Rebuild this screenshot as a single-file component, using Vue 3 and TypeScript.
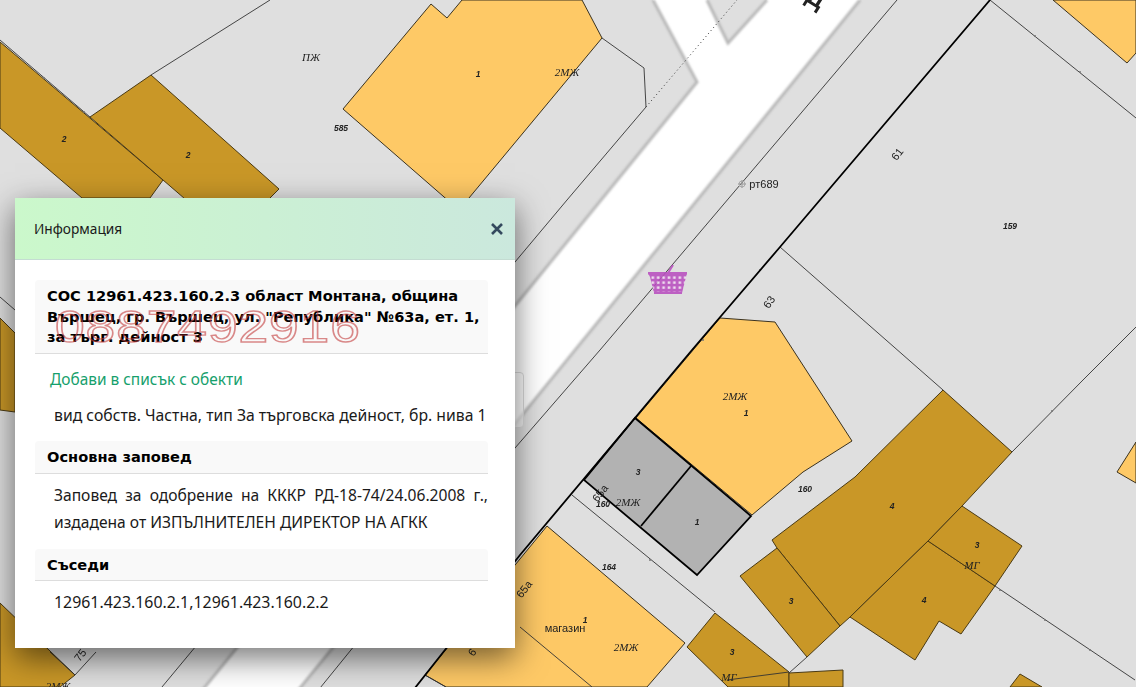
<script setup lang="ts">
import { ref } from 'vue'

interface MapLabel {
  text: string
  x: number
  y: number
  kind: string
  rotate?: number
}

const brown: string[] = [
  '0,42 6,47 163,180 150,198 82,198 0,128',
  '90,117 151,75 279,189 263,205 192,205',
  '0,318 15,333 15,412 0,410',
  '0,603 75,675 60,687 0,687',
  '943,390 1012,452 962,506 928,541 850,617 840,626 777,548 772,540 855,477',
  '777,548 740,576 807,657 840,626',
  '928,541 995,586 961,634 939,621 915,660 850,617',
  '962,506 1022,546 995,586 928,541',
  '715,613 687,647 728,687 789,687 789,672',
  '789,673 843,670 843,687 789,687',
  '1020,674 1010,687 1042,687'
]

const orange: string[] = [
  '431,4 447,18 462,0 582,0 602,38 459,210 343,109',
  '720,318 775,322 852,441 803,472 752,515 636,418',
  '547,526 685,643 647,687 446,687 425,675',
  '1053,0 1127,63 1136,53 1136,0',
  '1136,442 1117,472 1136,483'
]

const thinLines: string[] = [
  '897,0 600,350 515,448 316,693',
  '602,38 644,68 646,107 567,200 515,262 157,693',
  '780,247 943,390',
  '990,0 1136,118',
  '1012,452 1083,380 1136,327',
  '995,586 1135,680',
  '807,657 789,673',
  '789,672 727,680',
  '520,627 592,687',
  '572,495 715,612',
  '270,0 151,75',
  '0,40 90,117',
  '0,297 15,310',
  '50,652 75,675 96,652',
  '446,687 425,675'
]

const labels: MapLabel[] = [
  { text: 'ПЖ', x: 311, y: 61, kind: 'serif' },
  { text: '585', x: 341, y: 131, kind: 'num' },
  { text: '1', x: 478, y: 77, kind: 'num' },
  { text: '2МЖ', x: 567, y: 76, kind: 'serif' },
  { text: '2', x: 64, y: 142, kind: 'num' },
  { text: '2', x: 188, y: 158, kind: 'num' },
  { text: 'рт689', x: 764, y: 188, kind: 'plain' },
  { text: '61', x: 897, y: 158, kind: 'plain', rotate: -52 },
  { text: '159', x: 1010, y: 229, kind: 'num' },
  { text: '63', x: 769, y: 306, kind: 'plain', rotate: -55 },
  { text: '2МЖ', x: 735, y: 400, kind: 'serif' },
  { text: '1', x: 746, y: 416, kind: 'num' },
  { text: '3', x: 638, y: 475, kind: 'num' },
  { text: '1', x: 697, y: 525, kind: 'num' },
  { text: '2МЖ', x: 628, y: 506, kind: 'serif' },
  { text: '160', x: 603, y: 507, kind: 'num' },
  { text: '65а', x: 600, y: 497, kind: 'plain', rotate: -52 },
  { text: '160', x: 805, y: 492, kind: 'num' },
  { text: '164', x: 609, y: 570, kind: 'num' },
  { text: '65а', x: 524, y: 593, kind: 'plain', rotate: -52 },
  { text: '1', x: 585, y: 623, kind: 'num' },
  { text: 'магазин', x: 565, y: 632, kind: 'plain' },
  { text: '2МЖ', x: 626, y: 651, kind: 'serif' },
  { text: '3', x: 732, y: 655, kind: 'num' },
  { text: 'МГ', x: 729, y: 681, kind: 'serif' },
  { text: '4', x: 892, y: 509, kind: 'num' },
  { text: '3', x: 791, y: 604, kind: 'num' },
  { text: '4', x: 924, y: 603, kind: 'num' },
  { text: '3', x: 977, y: 548, kind: 'num' },
  { text: 'МГ', x: 972, y: 569, kind: 'serif' },
  { text: '75', x: 80, y: 659, kind: 'plain', rotate: -52 },
  { text: '6', x: 472, y: 656, kind: 'plain', rotate: -52 },
  { text: '2МЖ', x: 58, y: 690, kind: 'serif' }
]

const ticks: number[][] = [
  [44, 78], [84, 112], [1035, 36], [1080, 72], [760, 270], [703, 340], [608, 506], [650, 560],
  [1052, 411], [1000, 590], [1045, 620], [1090, 650]
]

const open = ref(true)
</script>

<template>
  <div class="page">
    <svg class="map" viewBox="0 0 1136 687" width="1136" height="687">
      <defs>
        <pattern id="basket-grid" width="5.4" height="5" patternUnits="userSpaceOnUse" x="650" y="275">
          <rect width="5.4" height="5" fill="#b94fc0" />
          <rect x="1.5" y="1.4" width="2.6" height="2.4" fill="#f0dcf0" />
        </pattern>
      </defs>
      <rect width="1136" height="687" fill="#dfdfdf" />
      <polygon points="653,0 697,82 200,693 296,693 860,0" fill="#fff" />
      <polygon points="707,0 728,43 767,0" fill="#dfdfdf" />
      <g class="road-edge">
        <polyline points="653,0 697,82 200,693" />
        <polyline points="860,0 296,693" />
        <polyline points="707,0 728,43 767,0" />
      </g>
      <polyline class="dots" points="646,107 737,0" />
      <polygon v-for="p in brown" :key="p" :points="p" class="brown" />
      <polygon v-for="p in orange" :key="p" :points="p" class="orange" />
      <polyline v-for="l in thinLines" :key="l" :points="l" class="thin" />
      <g class="tick">
        <circle v-for="t in ticks" :key="t.join()" :cx="t[0]" :cy="t[1]" r="1" />
      </g>
      <polygon class="selected" points="635,418 751,516 697,575 584,480" />
      <polyline class="heavy" points="691,466 641,526" />
      <polyline class="heavy" points="990,0 780,247 692,350 520,555 411,693" />
      <text
        v-for="l in labels"
        :key="l.text + l.x"
        :x="l.x"
        :y="l.y"
        :class="l.kind"
        :transform="l.rotate ? `rotate(${l.rotate} ${l.x} ${l.y - 4})` : undefined"
      >{{ l.text }}</text>
      <text class="street" x="812" y="5" transform="rotate(32 812 5)">Д</text>
      <g class="marker">
        <circle cx="742" cy="184" r="3" />
        <path d="M742 180 V188 M738 184 H746" />
      </g>
      <g class="basket">
        <line x1="668" y1="273" x2="673" y2="265" />
        <polygon points="648,273 687,273 686,277 682,293 654,293 650,277" fill="url(#basket-grid)" />
        <rect x="648" y="272" width="39" height="2.5" />
        <rect x="654" y="291.5" width="28" height="2.5" />
      </g>
    </svg>

    <div class="map-button"></div>

    <section v-if="open" class="panel">
      <header class="panel-head">
        <span>Информация</span>
        <button class="close" type="button" aria-label="Затвори" @click="open = false">
          <svg viewBox="0 0 12 12" width="12" height="12">
            <path d="M1 1 L11 11 M11 1 L1 11" />
          </svg>
        </button>
      </header>
      <div class="panel-body">
        <h3 class="title">СОС 12961.423.160.2.3 област Монтана, община Вършец, гр. Вършец, ул. "Република" №63а, ет. 1, за търг. дейност 3</h3>
        <a class="add-link" href="#" @click.prevent>Добави в списък с обекти</a>
        <p class="line-kind">вид собств. Частна, тип За търговска дейност, бр. нива 1</p>
        <h3 class="sub">Основна заповед</h3>
        <p class="text">Заповед за одобрение на КККР РД-18-74/24.06.2008 г., издадена от ИЗПЪЛНИТЕЛЕН ДИРЕКТОР НА АГКК</p>
        <h3 class="sub">Съседи</h3>
        <p class="text neighbours">12961.423.160.2.1,12961.423.160.2.2</p>
      </div>
      <div class="watermark">0887492916</div>
    </section>
  </div>
</template>

<style>
html,
body {
  margin: 0;
  overflow: hidden;
}
</style>

<style scoped>
.page {
  position: relative;
  width: 1136px;
  height: 687px;
  overflow: hidden;
  font-family: "Noto Sans", "DejaVu Sans", sans-serif;
  color: #1a1a1a;
}

.map {
  position: absolute;
  left: 0;
  top: 0;
  display: block;
  filter: blur(0.35px);
}

.road-edge polyline {
  fill: none;
  stroke: #b9b9b9;
  stroke-width: 3;
  filter: blur(0.8px);
}

.dots {
  fill: none;
  stroke: #333;
  stroke-width: 1;
  stroke-dasharray: 1 3;
}

.brown {
  fill: #c99727;
  stroke: #4a3a14;
  stroke-width: 1;
}

.orange {
  fill: #fec966;
  stroke: #3a3220;
  stroke-width: 1;
}

.thin {
  fill: none;
  stroke: #333;
  stroke-width: 0.9;
}

.tick {
  fill: #777;
}

.selected {
  fill: #b2b2b2;
  stroke: #000;
  stroke-width: 1.8;
}

.heavy {
  fill: none;
  stroke: #000;
  stroke-width: 1.8;
}

.serif,
.num,
.plain,
.street {
  text-anchor: middle;
  fill: #222;
}

.serif {
  font-family: "Liberation Serif", serif;
  font-style: italic;
  font-size: 11px;
}

.num {
  font-family: "Liberation Sans", sans-serif;
  font-style: italic;
  font-weight: 700;
  font-size: 8.5px;
}

.plain {
  font-family: "Liberation Sans", sans-serif;
  font-size: 11px;
}

.street {
  font-family: "Liberation Sans", sans-serif;
  font-weight: 700;
  font-size: 24px;
}

.marker circle {
  fill: none;
  stroke: #aaa;
}

.marker path {
  fill: none;
  stroke: #999;
}

.basket {
  opacity: 0.88;
}

.basket line {
  stroke: #b94fc0;
  stroke-width: 2;
}

.basket rect {
  fill: #b94fc0;
}

.map-button {
  position: absolute;
  left: 480px;
  top: 372px;
  width: 44px;
  height: 56px;
  box-sizing: border-box;
  border: 1px solid #ddd;
  border-radius: 4px;
  background: rgba(255, 255, 255, 0.6);
}

.panel {
  position: absolute;
  left: 15px;
  top: 198px;
  width: 500px;
  height: 450px;
  background: #fff;
  box-shadow: 0 10px 30px rgba(0, 0, 0, 0.55);
}

.panel-head {
  height: 62px;
  box-sizing: border-box;
  display: flex;
  align-items: center;
  justify-content: space-between;
  padding: 0 12px 0 19px;
  background: linear-gradient(90deg, #cbf8cb, #cbe8dd);
  border-bottom: 1px solid #c4dcd2;
  font-size: 13.7px;
}

.close {
  display: flex;
  padding: 0;
  margin-top: 1px;
  border: 0;
  background: none;
  cursor: pointer;
}

.close path {
  fill: none;
  stroke: #34495e;
  stroke-width: 2.6;
}

.panel-body {
  padding: 20px 27px 0 20px;
  font-size: 15.6px;
}

.title,
.sub {
  margin: 0;
  padding: 6px 12px 5px;
  background: #f9f9f9;
  border-bottom: 1px solid #ddd;
  border-radius: 4px 4px 0 0;
  font-family: "DejaVu Sans", sans-serif;
  font-size: 14.6px;
  font-weight: 700;
  line-height: 20.5px;
  color: #000;
}

.title {
  padding-right: 0;
}

.add-link {
  display: block;
  margin: 13px 0 0 15px;
  font-size: 15.45px;
  color: #16a06c;
  text-decoration: none;
  line-height: 24px;
}

.line-kind {
  margin: 12px 0 14.5px 19px;
  font-size: 15.75px;
  line-height: 24px;
}

.text {
  margin: 8px 0 13px 19px;
  line-height: 27px;
  text-align: justify;
}

.neighbours {
  margin-top: 8px;
  font-size: 15.9px;
}

.watermark {
  position: absolute;
  left: 40px;
  top: 104px;
  font-family: "Liberation Sans", sans-serif;
  font-size: 44px;
  line-height: 50px;
  letter-spacing: 0.8px;
  color: transparent;
  -webkit-text-stroke: 1.4px rgba(195, 60, 60, 0.6);
  transform: scaleX(1.21);
  transform-origin: left center;
  pointer-events: none;
  white-space: nowrap;
}
</style>
